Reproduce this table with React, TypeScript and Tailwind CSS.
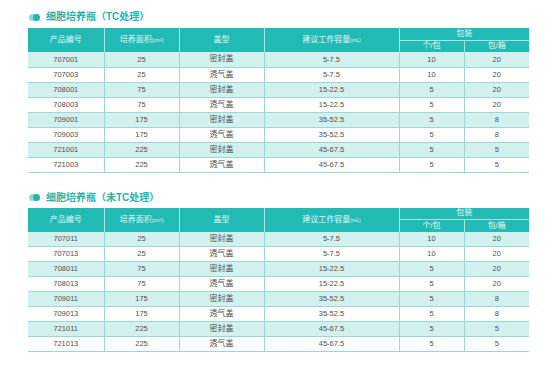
const ROWS_TC = [
  ["707001", "25", "密封盖", "5-7.5", "10", "20"],
  ["707003", "25", "透气盖", "5-7.5", "10", "20"],
  ["708001", "75", "密封盖", "15-22.5", "5", "20"],
  ["708003", "75", "透气盖", "15-22.5", "5", "20"],
  ["709001", "175", "密封盖", "35-52.5", "5", "8"],
  ["709003", "175", "透气盖", "35-52.5", "5", "8"],
  ["721001", "225", "密封盖", "45-67.5", "5", "5"],
  ["721003", "225", "透气盖", "45-67.5", "5", "5"],
];

const ROWS_NON = [
  ["707011", "25", "密封盖", "5-7.5", "10", "20"],
  ["707013", "25", "透气盖", "5-7.5", "10", "20"],
  ["708011", "75", "密封盖", "15-22.5", "5", "20"],
  ["708013", "75", "透气盖", "15-22.5", "5", "20"],
  ["709011", "175", "密封盖", "35-52.5", "5", "8"],
  ["709013", "175", "透气盖", "35-52.5", "5", "8"],
  ["721011", "225", "密封盖", "45-67.5", "5", "5"],
  ["721013", "225", "透气盖", "45-67.5", "5", "5"],
];

function Title({ text }: { text: string }) {
  return (
    <div className="flex h-[14px] items-center">
      <div className="relative ml-[29px] h-[7px] w-[11px]">
        <div className="absolute left-0 top-0 h-[7px] w-[9px] rounded-full bg-[#8fd8d3]" />
        <div className="absolute right-0 top-0 h-[7px] w-[7px] rounded-full bg-[#22b5ae]" />
      </div>
      <span className="ml-[6px] text-[10px] font-bold leading-none text-[#26b3ab]">
        {text}
      </span>
    </div>
  );
}

function ProductTable({ rows }: { rows: string[][] }) {
  const th = "border-x border-[#a8e4e1] font-normal text-[#e2f6f5]";
  return (
    <table className="ml-[28px] w-[501px] table-fixed border-collapse text-center">
      <colgroup>
        <col className="w-[76px]" />
        <col className="w-[75px]" />
        <col className="w-[85px]" />
        <col className="w-[135px]" />
        <col className="w-[65px]" />
        <col className="w-[65px]" />
      </colgroup>
      <thead className="bg-[#22bab5] text-[8px] leading-none">
        <tr className="h-[12px]">
          <th rowSpan={2} className={`${th} border-l-0`}>产品编号</th>
          <th rowSpan={2} className={th}>
            培养面积<span className="text-[5px]">(cm²)</span>
          </th>
          <th rowSpan={2} className={th}>盖型</th>
          <th rowSpan={2} className={th}>
            建议工作容量<span className="text-[5px]">(mL)</span>
          </th>
          <th colSpan={2} className={`${th} border-r-0 border-b`}>包装</th>
        </tr>
        <tr className="h-[12px]">
          <th className={th}>个/包</th>
          <th className={`${th} border-r-0`}>包/箱</th>
        </tr>
      </thead>
      <tbody className="text-[7.5px] leading-none text-[#505050]">
        {rows.map((r, i) => (
          <tr
            key={r[0]}
            className={`h-[15px] border-b border-[#9ad8d4] ${i % 2 === 0 ? "bg-[#d2f0ee]" : "bg-white"}`}
          >
            {r.map((c, j) => (
              <td
                key={j}
                className={`border-[#9ad8d4] ${j > 0 ? "border-l" : ""} ${j === 2 ? "text-[8px]" : ""}`}
              >
                {c}
              </td>
            ))}
          </tr>
        ))}
      </tbody>
    </table>
  );
}

export default function App() {
  return (
    <div
      className="h-[367px] w-[554px] bg-white"
      style={{ fontFamily: '"Liberation Sans", "Noto Sans CJK SC", sans-serif' }}
    >
      <div className="pt-[10px]">
        <Title text="细胞培养瓶（TC处理）" />
        <div className="mt-[4px]">
          <ProductTable rows={ROWS_TC} />
        </div>
      </div>
      <div className="mt-[18px]">
        <Title text="细胞培养瓶（未TC处理）" />
        <div className="mt-[3px]">
          <ProductTable rows={ROWS_NON} />
        </div>
      </div>
    </div>
  );
}
